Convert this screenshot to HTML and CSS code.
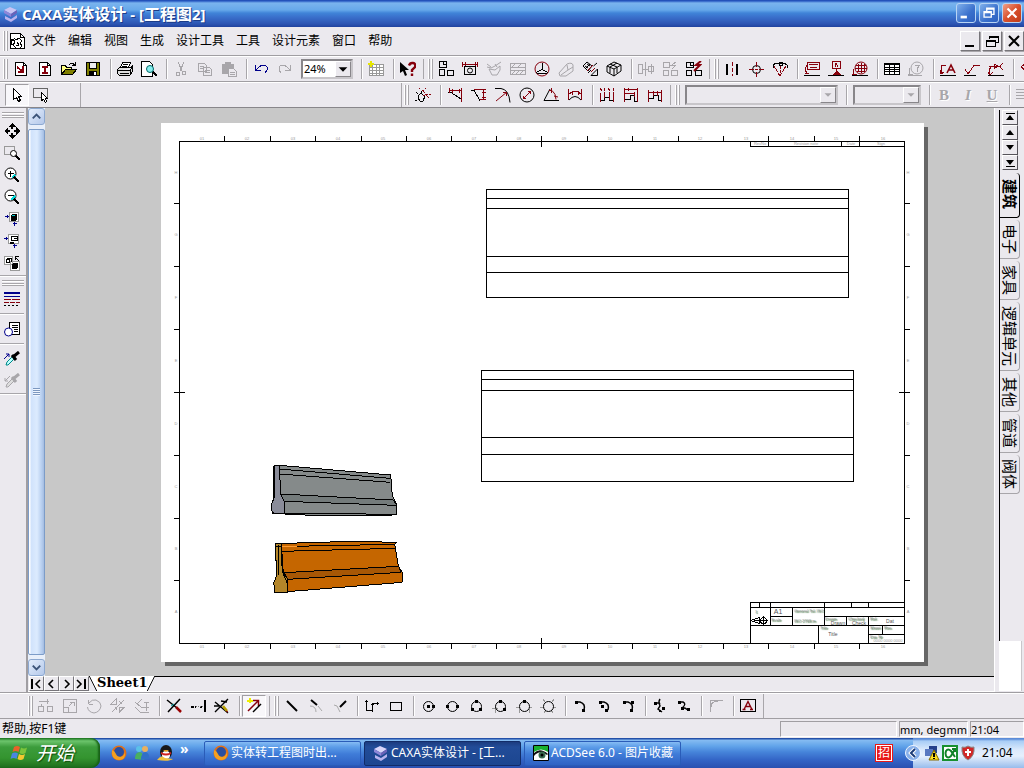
FILE: index.html
```html
<!DOCTYPE html>
<html lang="zh-CN">
<head>
    <meta charset="UTF-8">
    <meta name="viewport" content="width=device-width, initial-scale=1.0">
    <title>CAXA实体设计 - [工程图2]</title>
    <link rel="stylesheet" href="styles.css">
</head>
<body>
    <header class="titlebar">
        <svg class="logo" viewBox="0 0 16 16"><path fill="#c9c4f4" d="M1 4l6-3 7 3-6 4z"/><path fill="#8d86d8" d="M1 4l7 4v3L1 7z"/><path fill="#6a62b8" d="M14 4v3l-6 4V8z"/><path fill="#b8b2ee" d="M2 10l6 3 6-4v3l-6 4-6-3z"/></svg>
        <h1><span class="latin">CAXA</span>实体设计<span class="latin"> - [</span>工程图<span class="latin">2]</span></h1>
        <button class="winbtn" aria-label="最小化"><svg viewBox="0 0 20 20"><path fill="#fff" d="M4 13h7v3H4z"/></svg></button>
        <button class="winbtn" aria-label="还原"><svg viewBox="0 0 20 20"><path fill="none" stroke="#fff" stroke-width="1.500" d="M7.500 8V4.500h8v7H13M7 5.500h9M4.500 8.500h8v6h-8zM4 9.500h9"/></svg></button>
        <button class="winbtn close" aria-label="关闭"><svg viewBox="0 0 20 20"><path fill="none" stroke="#fff" stroke-width="2.400" d="M5 5l10 10M15 5L5 15"/></svg></button>
    </header>

    <nav class="menubar">
        <span class="grip"></span>
        <svg class="icon doc" viewBox="0 0 16 16"><path fill="#fff" d="M1.500.500h10l4 4v11h-14z"/><path d="M11.500 1v3.500H15M1 6h4M5 5l2 2 3-2 3 3-2 2 2 3-2 2M2 8l3-1 1 3-3 2zM4 12l3 3M8 9l2 3-3 1"/></svg>
        <button>文件</button>
        <button>编辑</button>
        <button>视图</button>
        <button>生成</button>
        <button>设计工具</button>
        <button>工具</button>
        <button>设计元素</button>
        <button>窗口</button>
        <button>帮助</button>
        <div class="mdi">
            <button aria-label="最小化"><svg class="icon" viewBox="0 0 16 16"><path class="fill" d="M3 12h9v2H3z"/></svg></button>
            <button aria-label="还原"><svg class="icon" viewBox="0 0 16 16"><path d="M5.500 6V3.500h9v6H12M5 4.500h10M2.500 7.500h9v6h-9zM2 8.500h10"/></svg></button>
            <button aria-label="关闭"><svg class="icon smooth" viewBox="0 0 16 16"><path stroke-width="2" d="M3 3l10 10M13 3L3 13"/></svg></button>
        </div>
    </nav>

    <div class="toolbar">
        <span class="grip"></span>
        <button aria-label="新建图纸"><svg class="icon" viewBox="0 0 16 16"><path fill="#fff" d="M2.500 1.500h8l3 3v10h-11z"/><path d="M10.500 2v2.500H13"/><path class="red" stroke-width="2" d="M4 6l5 4M10 5v6H5"/></svg></button>
        <button aria-label="新建"><svg class="icon" viewBox="0 0 16 16"><path fill="#fff" d="M2.500 1.500h8l3 3v10h-11z"/><path d="M10.500 2v2.500H13"/><path class="red" stroke-width="2" d="M5 6h6M5 12h6M8 6v6"/></svg></button>
        <button aria-label="打开"><svg class="icon" viewBox="0 0 16 16"><path fill="#ffff80" d="M.500 13.500v-9h4l1 2h5v2"/><path fill="#808000" d="M.500 13.500l4-5h11l-4 5z"/><path d="M8 3.500l2-1h2l2 2M14.500 1v3.500H11"/></svg></button>
        <button aria-label="保存"><svg class="icon" viewBox="0 0 16 16"><path fill="#808000" d="M1.500 1.500h13v13h-13z"/><path fill="#eee" d="M4.500 1.500h7v6h-7z"/><path class="fill" d="M4 10h8v5H4z"/><path fill="#fff" stroke="none" d="M9 11h2v3H9z"/></svg></button>
        <span class="sep"></span>
        <button aria-label="打印"><svg class="icon" viewBox="0 0 16 16"><path fill="#fff" d="M3.500 6.500l2-5h8l-2 5zM6 3.500h5M5 5.500h5"/><path fill="#ddd" d="M.500 8.500l2-2h11l2-2v6l-3 4H2.500l-2-2zM1 9.500h12l2-3M3 12.500h9M13.500 9v4"/></svg></button>
        <button aria-label="打印预览"><svg class="icon" viewBox="0 0 16 16"><path fill="#fff" d="M.500.500h8l3 3v12H.500z"/><circle fill="#8ee" stroke="#066" cx="9" cy="8" r="3.500"/><path stroke-width="2" d="M12 11l4 4"/></svg></button>
        <span class="sep"></span>
        <button disabled aria-label="剪切"><svg class="icon dim" viewBox="0 0 16 16"><path d="M5 1l4 9M11 1L7 10M3.500 11.500h3v3h-3zM9.500 10.500h3v3h-3z"/></svg></button>
        <button disabled aria-label="复制"><svg class="icon dim" viewBox="0 0 16 16"><path d="M1.500 2.500h6l2 2v6h-8zM3 5.500h4M3 7.500h4M6.500 6.500h6l2 2v6h-8zM8 9.500h5M8 11.500h5"/></svg></button>
        <button disabled aria-label="粘贴"><svg class="icon dim" viewBox="0 0 16 16"><path class="fill" d="M1 3h12v4h-6v6H1zM4 1h6v3H4z"/><path d="M7.500 7.500h5l3 3v5h-8zM9 11.500h5M9 13.500h5"/></svg></button>
        <span class="sep"></span>
        <button aria-label="撤消"><svg class="icon blue" viewBox="0 0 16 16"><path d="M2.500 4v5.500H8M3 9l3-3 3-2h3l2 2v3l-2 3"/></svg></button>
        <button disabled aria-label="重做"><svg class="icon dim" viewBox="0 0 16 16"><path d="M13.500 4v5.500H8M13 9l-3-3-3-2H4L2 6v3l2 3"/></svg></button>
        <span class="combo zoom">
            <select aria-label="显示比例"><option>24%</option><option>50%</option><option>100%</option></select>
            <svg class="arrow" viewBox="0 0 16 16"><path d="M3 6h10l-5 5z"/></svg>
        </span>
        <span class="sep"></span>
        <button aria-label="栅格"><svg class="icon" viewBox="0 0 16 16"><path stroke="#999" fill="#fff" d="M1.500 3.500h14v11h-14zM1 6.500h14M1 9.500h14M1 12.500h14M4.500 3v12M8.500 3v12M11.500 3v12"/><path stroke="#e6e600" stroke-width="2" d="M0 3h6M3 0v6"/></svg></button>
        <span class="sep"></span>
        <button aria-label="帮助"><svg class="icon smooth" viewBox="0 0 16 16"><path class="fill" d="M0 1v11l3-2 2 5 2-1-2-5h4z"/><path class="red" stroke-width="2.400" d="M9 4.500Q10 1.500 13 2t2 4l-3 3v2M12 12.500v2.500"/></svg></button>
        <span class="grip mid"></span>
        <button aria-label="标准视图"><svg class="icon" viewBox="0 0 16 16"><path d="M1.500.500h7v6h-7zM5 1v2.500h3M1.500 8.500h5v6h-5zM9.500 9.500h6v5h-6z"/></svg></button>
        <button aria-label="投影视图"><svg class="icon" viewBox="0 0 16 16"><path d="M2.500 5.500h11v8h-11z"/><circle cx="8" cy="9.500" r="2.500"/><path class="red" d="M.500 1v5M15.500 1v5M0 3.500h16M3 1v4M13 1v4"/></svg></button>
        <button disabled aria-label="向视图"><svg class="icon dim smooth" viewBox="0 0 16 16"><path d="M1 6l4 1 4-2 6-4M3 8l3 6h5l3-5V5L9 9zM1 3l4 3M9 3l2 3"/></svg></button>
        <button disabled aria-label="剖视图"><svg class="icon dim" viewBox="0 0 16 16"><path d="M.500 2.500h15v11H.500zM1 6.500h14M1 9.500h14M2 13l4-4M6 13l4-4M10 13l4-4M2 6l3-3M8 6l3-3"/></svg></button>
        <button aria-label="截断视图"><svg class="icon" viewBox="0 0 16 16"><circle class="red" cx="8" cy="8" r="7"/><path d="M8.500 2v6M8 8.500l-6 3M8 8.500l6 3M3 12h10"/></svg></button>
        <button disabled aria-label="局部放大"><svg class="icon dim smooth" viewBox="0 0 16 16"><path d="M1 12l8-9q5-2 6 1v6l-7 5H2zM9 4l1 5-7 5M10 9l5-3"/></svg></button>
        <button aria-label="辅助视图"><svg class="icon smooth" viewBox="0 0 16 16"><path d="M1 5l4-4 5 4-4 5zM3 5l3 2M5 3l3 2M4 7l4-4M11.500 5L15 2M6 12l3-3M9 14.500h6.500V8z"/><path class="red" d="M11 4l-6 6M9 11l4-4"/></svg></button>
        <button aria-label="轴测图"><svg class="icon smooth" viewBox="0 0 16 16"><path d="M1 5l7-4 7 3v6l-7 5-7-4zM1 5l7 3 7-4M8 8v7M4 3l7 3v6M11 2L4 6v6"/></svg></button>
        <span class="sep"></span>
        <button disabled aria-label="对齐"><svg class="icon dim" viewBox="0 0 16 16"><path d="M.500 3.500h4v9h-4zM7.500 1v14M10.500 5.500h5v5h-5zM5 8.500h5M13.500 3v10"/></svg></button>
        <button disabled aria-label="更新"><svg class="icon dim" viewBox="0 0 16 16"><path d="M1.500 1.500h6v5h-6zM1.500 9.500h5v5h-5zM9.500 9.500h6v5h-6zM14 1l-4 3h4l-4 4"/></svg></button>
        <button aria-label="更新全部"><svg class="icon" viewBox="0 0 16 16"><path d="M.500 1.500h7v5h-7zM4 2v2h3M.500 9.500h5v5h-5zM9.500 9.500h6v5h-6z"/><path class="red smooth" stroke-width="2" d="M15 0l-5 4h4l-6 6"/></svg></button>
        <span class="grip mid"></span>
        <button aria-label="中心线"><svg class="icon" viewBox="0 0 16 16"><path stroke-width="2" d="M3 3v11M13 3v11"/><path class="red" stroke-dasharray="4 2" d="M8.500 1v14"/></svg></button>
        <button aria-label="中心标记"><svg class="icon" viewBox="0 0 16 16"><circle cx="8.500" cy="8.500" r="4"/><path class="red" d="M8.500 1v5M8.500 11v5M1 8.500h5M11 8.500h5M7 8.500h3"/></svg></button>
        <button aria-label="孔组中心"><svg class="icon" viewBox="0 0 16 16"><path d="M1 4l3-2 4 1 4-1 3 2M1 4v3M15 4v3M7 1h3v3H7z"/><path class="red" stroke-dasharray="3 1" d="M2 5l6 10M14 5L8 15M8.500 5v9"/></svg></button>
        <span class="sep"></span>
        <button aria-label="引出说明"><svg class="icon red" viewBox="0 0 16 16"><path d="M3.500 1.500h12v7h-12zM5 3.500h9M6 6.500h7M3 4L1 8l2 5M1 12h4"/><path class="blk" d="M0 14.500h16"/></svg></button>
        <button aria-label="基准"><svg class="icon red" viewBox="0 0 16 16"><path d="M4.500.500h8v7h-8zM7 6l1-4 2 4M8.500 8v5"/><path class="redfill" d="M5 14l4-4 4 4z"/><path class="blk" d="M0 14.500h16"/></svg></button>
        <button aria-label="零件序号"><svg class="icon red" viewBox="0 0 16 16"><circle cx="9" cy="7" r="6"/><path d="M3 7h12M6 3v8M9 2v10M12 3v8M4 4h10M2 8l-1 5h4M5 10h8"/><path class="blk" d="M0 14.500h16"/></svg></button>
        <span class="sep"></span>
        <button aria-label="明细表"><svg class="icon" viewBox="0 0 16 16"><path fill="#fff" d="M.500 2.500h15v11H.500z"/><path d="M1 3.500h15M1 6.500h15M1 8.500h15M1 10.500h15M5.500 2v12M10.500 2v12"/></svg></button>
        <button disabled aria-label="查询"><svg class="icon dim" viewBox="0 0 16 16"><circle cx="9" cy="7" r="6"/><path d="M7 4h5L9 8v3M2 7l-1 6h4M0 14.500h14"/></svg></button>
        <span class="sep"></span>
        <button aria-label="文字标注"><svg class="icon red" viewBox="0 0 16 16"><path class="smooth" stroke-width="1.600" d="M7 12l4-8 4 8M8 9h5"/><path d="M6 4.500H1v8M0 9l1 4 3-2"/><path class="blk" d="M0 14.500h16"/></svg></button>
        <button aria-label="粗糙度"><svg class="icon red" viewBox="0 0 16 16"><path d="M1 8l3 5 6-8.500h6"/><path class="blk" d="M0 14.500h12"/></svg></button>
        <button aria-label="焊接符号"><svg class="icon red" viewBox="0 0 16 16"><path d="M1 5.500h12M15 2l-3 3.500 3 3.500M6 3v5l4-3zM3 5l-2 5 1 3M0 11l2 3 3-3"/><path class="blk" d="M0 14.500h16"/></svg></button>
        <span class="sep"></span>
        <button aria-label="更多"><svg class="icon red" viewBox="0 0 16 16"><path d="M1 6l4-3v6z"/></svg></button>
    </div>

    <div class="toolbar">
        <div class="group first">
            <button class="pressed" aria-label="选择"><svg class="icon" viewBox="0 0 16 16"><path fill="#fff" d="M4.500 1.500v11l3-2 2 4 2-1-2-4h3z"/></svg></button>
            <button aria-label="框选"><svg class="icon" viewBox="0 0 16 16"><path stroke="#666" d="M.500 1.500h14v9H.500z"/><path fill="#fff" d="M8.500 5.500v8l2-1 2 3 1-1-1-3h2z"/></svg></button>
        </div>
        <div class="group blank"></div>
        <span class="grip"></span>
        <button aria-label="智能标注"><svg class="icon" viewBox="0 0 16 16"><path d="M4 8l2-2 2 2 2 1-2 5H5l-2-3zM6 6V4M3 7L1 5M2 13l-2 1"/><path class="red" stroke-dasharray="2 1" d="M4 1l4 3 7 8M11 1l-3 4M8 9l8-2"/></svg></button>
        <span class="sep"></span>
        <button aria-label="水平标注"><svg class="icon" viewBox="0 0 16 16"><path d="M1 5.500h3L14 12"/><path class="red" d="M2.500 1v5M14.500 1v14M3 3.500h11M5 2v4M12 2v4"/></svg></button>
        <button aria-label="垂直标注"><svg class="icon" viewBox="0 0 16 16"><path d="M0 3h3l6 11"/><path class="red" d="M3 2.500h12M9 12.500h6M12.500 3v10M11 5h4M11 10h4"/></svg></button>
        <button aria-label="半径标注"><svg class="icon smooth" viewBox="0 0 16 16"><path d="M0 1.500h6q8 1 9 14"/><path class="red" d="M1 14L12 5M8 5.500h3.500V9"/></svg></button>
        <button aria-label="直径标注"><svg class="icon smooth" viewBox="0 0 16 16"><circle cx="8" cy="8" r="7"/><path class="red" d="M4 12l8-8M9 4.500h2.500V7M4.500 9v2.500H7"/></svg></button>
        <button aria-label="角度标注"><svg class="icon smooth" viewBox="0 0 16 16"><path d="M7 2L1 13.500h15"/><path class="red" d="M6 3.500h3q4 3 4 9M8.500 1v5M11 9l4 1"/></svg></button>
        <button aria-label="弧长标注"><svg class="icon red" viewBox="0 0 16 16"><path d="M1.500 2v11M14.500 2v11M2 7l3-2q3-2 6 0l3 2M5 4v4M11 4v4"/><path class="blk smooth" d="M2 13q6-7 12 0"/></svg></button>
        <span class="sep"></span>
        <button aria-label="连续标注"><svg class="icon" viewBox="0 0 16 16"><path d="M1 13.500h4V6M5 10.500h5V6M10 13.500h4V6"/><path class="red" d="M1.500 6v9M5.500 5v6M10.500 5v8M14.500 5v10M1 1l2 3M5 1v3M9 1l2 3M14 1v3"/></svg></button>
        <button aria-label="基线标注"><svg class="icon" viewBox="0 0 16 16"><path d="M2 12.500h5v-4h4v6h4"/><path class="red" d="M1.500 1v14M14.500 1v14M2 2.500h12M2 6.500h9M5 1v3M11 5v5"/></svg></button>
        <button aria-label="链式标注"><svg class="icon" viewBox="0 0 16 16"><path d="M2 11.500h4v-3h5v5h4"/><path class="red" d="M1.500 3v12M14.500 3v12M2 5.500h12M6.500 4v5M10.500 4v5"/></svg></button>
        <span class="grip mid"></span>
        <span class="combo font">
            <select disabled aria-label="字体"><option></option></select>
            <svg class="arrow" viewBox="0 0 16 16"><path d="M4 6h8l-4 4z"/></svg>
        </span>
        <span class="sep"></span>
        <span class="combo size">
            <select disabled aria-label="字号"><option></option></select>
            <svg class="arrow" viewBox="0 0 16 16"><path d="M4 6h8l-4 4z"/></svg>
        </span>
        <span class="sep"></span>
        <button disabled class="letter"><b>B</b></button>
        <button disabled class="letter"><i>I</i></button>
        <button disabled class="letter"><u>U</u></button>
        <span class="sep"></span>
        <button disabled aria-label="左对齐"><svg class="icon dim" viewBox="0 0 16 16"><path d="M0 2.500h16M0 5.500h12M0 8.500h16M0 11.500h12"/></svg></button>
    </div>

    <div class="workspace">
        <aside class="sidebar">
            <span class="hgrip"></span>
            <button aria-label="平移"><svg class="icon" viewBox="0 0 16 16"><path class="fill" d="M8 0l4 4H9v2H7V4H4zM8 16l4-4H9v-2H7v2H4zM0 8l4-4v3h2v2H4v3zM16 8l-4-4v3h-2v2h2v3z"/></svg></button>
            <button aria-label="窗口缩放"><svg class="icon" viewBox="0 0 16 16"><path stroke="#999" d="M.500 1.500h10v8H.500z"/><circle fill="#fff" cx="9.500" cy="8.500" r="3"/><path stroke-width="2" d="M12 11l4 4"/></svg></button>
            <button aria-label="放大"><svg class="icon" viewBox="0 0 16 16"><circle fill="#fff" cx="6.500" cy="6.500" r="5.500"/><path stroke="#0dd" stroke-width="2" d="M8 11l3-3"/><path d="M4 6.500h6M6.500 4v6"/><path stroke-width="2" d="M10 10l5 5"/></svg></button>
            <button aria-label="缩小"><svg class="icon" viewBox="0 0 16 16"><circle fill="#fff" cx="6.500" cy="6.500" r="5.500"/><path stroke="#0dd" stroke-width="2" d="M7 11l4-4"/><path d="M4 6.500h6"/><path stroke-width="2" d="M10 10l5 5"/></svg></button>
            <button aria-label="显示全部"><svg class="icon" viewBox="0 0 16 16"><path stroke="#999" fill="#fff" d="M5.500 1.500h9v9h-9z"/><path class="fill" d="M7 4l2-1h4v5l-2 2H7z"/><path stroke="#0cc" d="M8 4.500h3"/><path class="blue" d="M1 5.500h4M3.500 4v3M10.500 11v4M9 12.500h4"/></svg></button>
            <button aria-label="显示图纸"><svg class="icon" viewBox="0 0 16 16"><path stroke="#999" fill="#fff" d="M4.500 1.500h10v9h-10z"/><path d="M7.500 3.500h6v4h-6zM10 5.500h3"/><path class="fill" d="M6 9h4v2H6z"/><path class="blue" d="M0 5.500h4M2.500 4v3M10.500 11v4M9 12.500h4"/></svg></button>
            <button aria-label="恢复视向"><svg class="icon" viewBox="0 0 16 16"><path stroke="#999" fill="#fff" d="M.500 1.500h8v8h-8zM6.500 6.500h9v9h-9z"/><path d="M2.500 4.500h3v3h-3zM3 3.500h4v3M11 5V1.500h4M11 2l4 4"/><path class="fill" d="M8 9l2-1h4v4l-2 2H8z"/></svg></button>
            <span class="hsep wide"></span>
            <span class="hgrip"></span>
            <button aria-label="线型"><svg class="icon" viewBox="0 0 16 16"><path stroke="#00008b" stroke-width="2" d="M0 2h16"/><path class="blue" d="M0 5.500h16"/><path class="red" d="M0 8.500h7M8 8.500h8M0 11.500h5M6 11.500h5M12 11.500h4"/><path stroke-dasharray="2 2" d="M0 14.500h16"/></svg></button>
            <span class="hsep"></span>
            <button aria-label="属性"><svg class="icon" viewBox="0 0 16 16"><path fill="#fff" d="M5.500 1.500h10v12h-10z"/><path d="M8 4.500h6M8 6.500h6M10 8.500h4M10 10.500h4"/><circle class="blue" fill="#fff" cx="4.500" cy="11" r="4"/></svg></button>
            <span class="hsep"></span>
            <button aria-label="提取属性"><svg class="icon smooth" viewBox="0 0 16 16"><path stroke="#088" fill="#bff" d="M2 14l1-3 6-6 2 2-7 7z"/><path stroke-width="3" d="M9 6l6-5M8 4l4 5"/><path class="blue" d="M0 8l5-5M2 3h3v3"/></svg></button>
            <button disabled aria-label="应用属性"><svg class="icon dim smooth" viewBox="0 0 16 16"><path fill="#ddd" d="M2 14l1-3 6-6 2 2-7 7z"/><path stroke-width="3" d="M9 6l6-5M8 4l4 5"/><path d="M1 8l5-5M1 5v3h3"/></svg></button>
            <span class="hsep wide"></span>
        </aside>

        <div class="center">
            <div class="view">
                <div class="vscroll">
                    <button aria-label="向上滚动"><svg viewBox="0 0 16 16"><path d="M4 10l4-4 4 4"/></svg></button>
                    <div class="thumb"><i></i></div>
                    <button aria-label="向下滚动"><svg viewBox="0 0 16 16"><path d="M4 6l4 4 4-4"/></svg></button>
                </div>
                <main class="canvas">
                    <svg class="sheet" viewBox="161 123 763 539">
                        <!-- border and zone marks -->
                        <path class="line" d="M179.500 141.500h725v502h-725z"/>
                        <path class="line" d="M224.500 136v5M270.500 136v5M315.500 136v5M361.500 136v5M406.500 136v5M451.500 136v5M496.500 136v5M541.500 136v11M587.500 136v5M632.500 136v5M678.500 136v5M723.500 136v5M768.500 136v5M814.500 136v5M859.500 136v5"/>
                        <path class="line" d="M224.500 643v6M270.500 643v6M315.500 643v6M361.500 643v6M406.500 643v6M451.500 643v6M496.500 643v6M541.500 638v11M587.500 643v6M632.500 643v6M678.500 643v6M723.500 643v6M768.500 643v6M814.500 643v6M859.500 643v6"/>
                        <path class="line" d="M174 203.500h6M174 266.500h6M174 329.500h6M174 392.500h11M174 455.500h6M174 518.500h6M174 580.500h6M904 203.500h6M904 266.500h6M904 329.500h6M899 392.500h11M904 455.500h6M904 518.500h6M904 580.500h6"/>
                        <g class="zone">
                            <text x="202" y="140">01</text><text x="247" y="140">02</text><text x="293" y="140">03</text><text x="338" y="140">04</text><text x="383" y="140">05</text><text x="429" y="140">06</text><text x="474" y="140">07</text><text x="519" y="140">08</text><text x="564" y="140">09</text><text x="610" y="140">10</text><text x="655" y="140">11</text><text x="700" y="140">12</text><text x="746" y="140">13</text><text x="792" y="140">14</text><text x="836" y="140">15</text><text x="883" y="140">16</text>
                            <text x="202" y="648">01</text><text x="247" y="648">02</text><text x="293" y="648">03</text><text x="338" y="648">04</text><text x="383" y="648">05</text><text x="429" y="648">06</text><text x="474" y="648">07</text><text x="519" y="648">08</text><text x="564" y="648">09</text><text x="610" y="648">10</text><text x="655" y="648">11</text><text x="700" y="648">12</text><text x="746" y="648">13</text><text x="792" y="648">14</text><text x="836" y="648">15</text><text x="883" y="648">16</text>
                            <text x="176" y="174">H</text><text x="176" y="236">G</text><text x="176" y="299">F</text><text x="176" y="362">E</text><text x="176" y="425">D</text><text x="176" y="488">C</text><text x="176" y="550">B</text><text x="176" y="613">A</text>
                            <text x="908" y="174">H</text><text x="908" y="236">G</text><text x="908" y="299">F</text><text x="908" y="362">E</text><text x="908" y="425">D</text><text x="908" y="488">C</text><text x="908" y="550">B</text><text x="908" y="613">A</text>
                        </g>
                        <!-- revision strip -->
                        <path class="line" d="M750.500 141v5.500h154M768.500 141v5M841.500 141v5M859.500 141v5"/>
                        <g class="zone"><text x="760" y="145">RevNo</text><text x="806" y="145">Revision note</text><text x="851" y="145">Date</text><text x="881" y="145">Sign</text></g>
                        <!-- front and top views -->
                        <path class="line" d="M486.500 189.500h362v108h-362zM486 198.500h362M486 208.500h362M486 256.500h362M486 272.500h362"/>
                        <path class="line" d="M481.500 370.500h372v111h-372zM481 379.500h372M481 390.500h372M481 437.500h372M481 454.500h372"/>
                        <!-- shaded isometric views -->
                        <g class="solid" transform="translate(255 450) scale(.33333)">
                            <path fill="#858a8a" d="M57 47l16-1 334 29 5 62 13 27v28l-28 6-250-3-95-5-2-26 7-25z"/>
                            <path fill="#8a8c99" d="M57 47l16-1 4 86 11 22v37H52l-3-26 10-25z"/>
                            <path fill="#747b7b" d="M77 132l337 18 11 16-337-12z"/>
                            <path d="M72 57l333 28M72 72l334 25M52 189l373 4M88 154v37"/>
                            <path fill="#c56600" d="M61 281l232-7 132 3-6 6 11 66 12 18v30L60 428l-4-30 9-16z"/>
                            <path fill="#b4862a" d="M61 281h18l6 90 14 17v40H60l-4-30 9-20z"/>
                            <path fill="#a75705" d="M87 368l344-19 6 18-338 21z"/>
                            <path d="M61 290l357-7M80 304l340-9M70 285l2 90M78 290l4 75 15 35v27"/>
                            <path class="shine" d="M82 289l45-1"/>
                        </g>
                        <!-- title block -->
                        <path class="line" d="M750.500 643v-40.500h154M750 607.500h154M759.500 602v5M770.500 602v23M824.500 602v23M851.500 602v5M868.500 602v5M792.500 607v18M770 616.500h22M824 616.500h80M846.500 616v9M868.500 616v27M750 625.500h154M818.500 625v18M868 634.500h36M882.500 625v9"/>
                        <path class="line" d="M751 620.500l8-3v6zM754 620.500h14M763.500 616v9"/><circle class="line" cx="763.500" cy="620.500" r="3"/>
                        <g class="zone start"><text x="755" y="613">1</text><text x="771" y="621">Scale</text><text x="794" y="612">General Tol. ISO</text><text x="794" y="622">ISO 2768-m</text><text x="825" y="620">Drawn</text><text x="848" y="620">Checked</text><text x="870" y="620">Ref.</text><text x="820" y="629">Title</text><text x="870" y="629">Sheet</text><text x="884" y="629">Rev.</text><text x="870" y="638">Doc Nr</text></g>
                        <g class="field"><text x="778" y="614" class="big">A1</text><text x="838" y="625">Drawn</text><text x="859" y="625">Check</text><text x="890" y="623">Dat</text><text x="833" y="636">Title</text></g>
                        <g class="zone"><text x="888" y="642">0000 0000 0000</text></g>
                    </svg>
                </main>
            </div>
            <div class="sheettabs">
                <button class="nav" aria-label="第一页"><svg class="icon" viewBox="0 0 13 13"><path stroke-width="2" d="M2 2v10"/><path class="smooth" stroke-width="1.600" d="M10 3L6 7l4 4"/></svg></button>
                <button class="nav" aria-label="上一页"><svg class="icon" viewBox="0 0 13 13"><path class="smooth" stroke-width="1.600" d="M8 3L4 7l4 4"/></svg></button>
                <button class="nav" aria-label="下一页"><svg class="icon" viewBox="0 0 13 13"><path class="smooth" stroke-width="1.600" d="M5 3l4 4-4 4"/></svg></button>
                <button class="nav" aria-label="最后一页"><svg class="icon" viewBox="0 0 13 13"><path class="smooth" stroke-width="1.600" d="M2 3l4 4-4 4"/><path stroke-width="2" d="M10 2v10"/></svg></button>
                <button class="tab"><svg viewBox="0 0 8 16"><path class="paper" d="M0 0h8v16z"/><path d="M0 0l8 16"/></svg><span>Sheet1</span><svg viewBox="0 0 8 16"><path class="paper" d="M0 0h8L0 16z"/><path d="M8 0L0 16"/></svg></button>
                <span class="rest"></span>
            </div>
        </div>

        <aside class="catalog">
            <div class="strip">
                <button class="nav" aria-label="首个"><svg viewBox="0 0 14 13"><path d="M3 2h9v1H3zM7 4l4 5H3z"/></svg></button>
                <button class="nav" aria-label="向上"><svg viewBox="0 0 14 13"><path d="M7 4l4 5H3z"/></svg></button>
                <button class="nav" aria-label="向下"><svg viewBox="0 0 14 13"><path d="M3 4h8l-4 5z"/></svg></button>
                <button class="nav" aria-label="末个"><svg viewBox="0 0 14 13"><path d="M3 4h8l-4 5zM3 10h9v1H3z"/></svg></button>
                <div class="tabs">
                    <button class="on">建筑</button>
                    <button>电子</button>
                    <button>家具</button>
                    <button>逻辑单元</button>
                    <button>其他</button>
                    <button>管道</button>
                    <button>阀体</button>
                </div>
            </div>
            <div class="well"></div>
        </aside>
    </div>

    <div class="toolbar bottom">
        <span class="grip"></span>
        <button disabled aria-label="移动"><svg class="icon dim" viewBox="0 0 16 16"><path d="M.500 8.500h5v5h-5zM9.500 8.500h5v5h-5zM1 3.500h10M9 1v5M3.500 6v2"/></svg></button>
        <button disabled aria-label="缩放"><svg class="icon dim" viewBox="0 0 16 16"><path d="M1.500 1.500h13v13h-13zM1.500 9.500h5v5M7 8l4-4M8 4.500h4V8"/></svg></button>
        <button disabled aria-label="旋转"><svg class="icon dim smooth" viewBox="0 0 16 16"><path d="M3 6.500h4M2.500 2v4M3 5q3-4 7-3 5 2 5 6-1 6-7 7-6-1-6.500-6"/></svg></button>
        <button disabled aria-label="镜像"><svg class="icon dim" viewBox="0 0 16 16"><path d="M1 6l5-5v5zM9 9.500h5l-5 5zM2 14L14 2M9 3l3 3M5 9l2 3"/></svg></button>
        <button disabled aria-label="偏移"><svg class="icon dim" viewBox="0 0 16 16"><path d="M1 4l6 5h8M1 9l5 5h9M8 1L3 6M12.500 5v8M10 4.500h5"/></svg></button>
        <span class="sep"></span>
        <button aria-label="裁剪"><svg class="icon smooth" viewBox="0 0 16 16"><path stroke-width="1.500" d="M1 2l10 8M14 1L2 14"/><path stroke="#900" stroke-width="2.500" d="M10 9l5 5"/><path stroke="#0aa" d="M5 8l3-2"/></svg></button>
        <button aria-label="延伸"><svg class="icon" viewBox="0 0 16 16"><path stroke-width="2" d="M15 2v12M1 9h3M5 9h1M11 8v2"/><path stroke="#777" stroke-dasharray="1 1" d="M6 8.500h8"/></svg></button>
        <button aria-label="打断"><svg class="icon smooth" viewBox="0 0 16 16"><path stroke-width="1.400" d="M1 4l13 11M14 1L1 14M0 8h5M7 3l6 1"/><path stroke="#b8a000" stroke-width="2.500" d="M9 8l4 5"/><path stroke="#800" d="M12 13l2 1"/></svg></button>
        <span class="sep"></span>
        <button class="pressed" aria-label="捕捉"><svg class="icon smooth" viewBox="0 0 16 16"><path stroke="#ee0" stroke-width="2" d="M1 3h6M4 0v5"/><path class="red" stroke-width="1.500" d="M2 13l10-10M7 2.500h5.500V8"/><path stroke-width="1.500" d="M7 14l8-8"/></svg></button>
        <span class="grip mid"></span>
        <button aria-label="直线"><svg class="icon smooth" viewBox="0 0 16 16"><path stroke-width="2" d="M3 3l10 10"/></svg></button>
        <button aria-label="切线"><svg class="icon smooth" viewBox="0 0 16 16"><path stroke-width="2" d="M3 2l6 5"/><path stroke="#aaa" d="M2 8q6 0 6 6M10 8l4 5"/></svg></button>
        <button aria-label="垂线"><svg class="icon smooth" viewBox="0 0 16 16"><path stroke-width="2" d="M14 3L8 9"/><path stroke="#aaa" d="M2 7l3 1 3 6"/></svg></button>
        <span class="sep"></span>
        <button aria-label="折线"><svg class="icon" viewBox="0 0 16 16"><path d="M2.500 2v11M1 3.500h3M2 12.500h6M8.500 14V5.500H15M13 4v3M7 6.500h3"/></svg></button>
        <button aria-label="矩形"><svg class="icon" viewBox="0 0 16 16"><path d="M2.500 4.500h11v8h-11z"/></svg></button>
        <span class="sep"></span>
        <button aria-label="圆"><svg class="icon" viewBox="0 0 16 16"><circle cx="8.500" cy="8.500" r="5"/><path class="fill" d="M7 7h3v3H7zM12 7h3v3h-3z"/></svg></button>
        <button aria-label="两点圆"><svg class="icon" viewBox="0 0 16 16"><circle cx="8.500" cy="8.500" r="5"/><path class="fill" d="M2 7h3v3H2zM12 7h3v3h-3z"/></svg></button>
        <button aria-label="三点圆"><svg class="icon" viewBox="0 0 16 16"><circle cx="8.500" cy="8.500" r="5"/><path class="fill" d="M7 2h3v3H7zM3 10h3v3H3zM11 10h3v3h-3z"/></svg></button>
        <button aria-label="一切点圆"><svg class="icon" viewBox="0 0 16 16"><path stroke="#999" d="M0 10.500h6M3.500 8v7"/><circle cx="8.500" cy="8.500" r="5"/><path class="fill" d="M7 2h3v3H7zM11 10h3v3h-3z"/></svg></button>
        <button aria-label="两切点圆"><svg class="icon" viewBox="0 0 16 16"><path stroke="#999" d="M0 9.500h16M3.500 11v4M13.500 11v4"/><circle fill="#ebe9ee" cx="8.500" cy="8.500" r="5"/><path class="fill" d="M7 2h3v3H7z"/></svg></button>
        <button aria-label="三切点圆"><svg class="icon" viewBox="0 0 16 16"><path stroke="#999" d="M0 9.500h16M3 1l2 3M14 1l-2 3M4 15l2-3M13 15l-2-3"/><circle fill="#ebe9ee" cx="8.500" cy="8.500" r="5"/></svg></button>
        <span class="sep"></span>
        <button aria-label="圆弧"><svg class="icon" viewBox="0 0 16 16"><path class="smooth" stroke-width="1.400" d="M4 4h4q6 2 4 8"/><path class="fill" d="M3 3h3v3H3zM10 11h3v3h-3z"/></svg></button>
        <button aria-label="圆心弧"><svg class="icon" viewBox="0 0 16 16"><path class="smooth" stroke-width="1.400" d="M4 4h4q6 2 4 8"/><path class="fill" d="M3 3h3v3H3zM5 7h3v3H5zM9 11h3v3H9z"/></svg></button>
        <button aria-label="三点弧"><svg class="icon" viewBox="0 0 16 16"><path class="smooth" stroke-width="1.400" d="M4 4h4q6 2 4 8"/><path class="fill" d="M3 3h3v3H3zM11 3h3v3h-3zM10 11h3v3h-3z"/></svg></button>
        <span class="sep"></span>
        <button aria-label="样条"><svg class="icon" viewBox="0 0 16 16"><path class="smooth" stroke-width="1.400" d="M3 5h4l1 3-2 3 4 3M8 1q-2 3 0 5"/><path class="fill" d="M2 4h3v3H2zM10 9h3v3h-3zM7 12h2v2H7z"/></svg></button>
        <button aria-label="贝塞尔"><svg class="icon" viewBox="0 0 16 16"><path class="smooth" stroke-width="1.400" d="M3 4h4q4 2-1 6 2-1 6 2"/><path class="fill" d="M2 3h3v3H2zM11 10h3v3h-3zM5 9h3v3H5z"/></svg></button>
        <span class="sep"></span>
        <button disabled aria-label="圆角"><svg class="icon dim" viewBox="0 0 16 16"><path d="M2.500 14V2.500H15M3 9q0-6 7-6"/></svg></button>
        <span class="sep"></span>
        <button aria-label="文字"><svg class="icon" viewBox="0 0 16 16"><path d="M.500 1.500h15v12H.500z"/><path class="red smooth" stroke-width="1.400" d="M4 11.500l4-8 4 8M5.500 8.500h5M2.500 11.500h3M10 11.500h3"/></svg></button>
        <span class="end"></span>
    </div>

    <div class="status">
        <p>帮助,按F1键</p>
        <span class="pane wide"></span>
        <span class="pane units"><span>mm, deg</span><span>mm</span></span>
        <span class="pane time">21:04</span>
    </div>

    <footer class="taskbar">
        <button class="start">
            <svg viewBox="0 0 20 20"><path fill="#e8622a" d="M4 4q3-2 6 0L8.500 9q-3-2-6 0z"/><path fill="#7cc43c" d="M11 4.500q3 2 6 0L15.500 10q-3 2-6 0z"/><path fill="#4a86e0" d="M2 10.500q3-2 6 0L6.500 16q-3-2-6 0z"/><path fill="#f4c830" d="M9 11q3 2 6 0l-1.500 5q-3 2-6 0z"/></svg>
            <span>开始</span>
        </button>
        <div class="quick">
            <button aria-label="Firefox"><svg viewBox="0 0 16 16"><circle cx="8" cy="8" r="7.500" fill="#e07018"/><circle cx="8" cy="7" r="5" fill="#2a4fa0"/><path fill="#f4a020" d="M1 5q3 1 4 4t5 3q3-1 4-5 1 7-5 8-7 0-8-6z"/></svg></button>
            <button aria-label="Messenger"><svg viewBox="0 0 16 16"><circle cx="5" cy="4" r="3" fill="#5ac0e8"/><circle cx="11" cy="4" r="3" fill="#e8b060"/><path fill="#4ab060" d="M1 14q0-7 5-7 4 1 4 8z"/><path fill="#3070c8" d="M7 15q0-8 5-8 4 2 3 7z"/></svg></button>
            <button aria-label="QQ"><svg viewBox="0 0 16 16"><ellipse cx="9" cy="7" rx="6" ry="7" fill="#181818"/><ellipse cx="9" cy="10" rx="4" ry="4" fill="#fff"/><path fill="#e8a020" d="M6 5h6l-3 2z"/><path fill="#d02020" d="M4 7q5 3 10 0v2q-5 3-10 0z"/><path fill="#f0c040" d="M0 15q4-6 8-2l8 1q-4 3-16 1z"/></svg></button>
            <span class="more">»</span>
        </div>
        <button class="task"><svg viewBox="0 0 16 16"><circle cx="8" cy="8" r="7.500" fill="#e07018"/><circle cx="8" cy="7" r="5" fill="#2a4fa0"/><path fill="#f4a020" d="M1 5q3 1 4 4t5 3q3-1 4-5 1 7-5 8-7 0-8-6z"/></svg><span>实体转工程图时出...</span></button>
        <button class="task active"><svg viewBox="0 0 16 16"><path fill="#d9d5fa" d="M1 4l6-3 7 3-6 4z"/><path fill="#8d86d8" d="M1 4l7 4v3L1 7z"/><path fill="#6a62b8" d="M14 4v3l-6 4V8z"/><path fill="#b8b2ee" d="M2 10l6 3 6-4v3l-6 4-6-3z"/></svg><span>CAXA实体设计 - [工...</span></button>
        <button class="task"><svg viewBox="0 0 16 16"><path fill="#fff" stroke="#000" d="M.500.500h15v15H.500z"/><path fill="#18b030" d="M1 1h14v6Q8 2 1 7z"/><path fill="#111" d="M1 8q6-6 14 1l-1 1Q7 4 1 11z"/><circle cx="9" cy="10" r="3.500" fill="#3a6a50"/><circle cx="9" cy="10" r="1.500"/></svg><span>ACDSee 6.0 - 图片收藏</span></button>
        <div class="lang">招</div>
        <div class="tray">
            <button class="fold" aria-label="隐藏图标"><svg viewBox="0 0 16 16"><circle cx="8" cy="8" r="7.500" fill="#88b0ea" stroke="#eef5ff"/><path fill="none" stroke="#fff" stroke-width="4" d="M10 4L6 8l4 4"/><path fill="none" stroke="#1c3c78" stroke-width="2" d="M10 4L6 8l4 4"/></svg></button>
            <svg viewBox="0 0 16 16"><path fill="#24408c" d="M5 1h8v7H5z"/><path fill="#5878c0" d="M1 4h8v7H1z"/><path fill="#ffe020" stroke="#806800" d="M10 5l5 10H5z"/><path stroke="#000" stroke-width="2" d="M10 8v4M10 13v1"/></svg>
            <svg viewBox="0 0 16 16"><path fill="#fff" stroke="#189030" stroke-width="2" d="M1 1h14v14H1z"/><path fill="none" stroke="#108028" stroke-width="2" d="M13 4l-4 7q-3 3-5 0-1-3 0-5 2-3 5 0l4 6M10 4h3v3"/></svg>
            <svg viewBox="0 0 16 16"><path fill="#d02828" stroke="#888" d="M2 2q3 1 6-1 3 2 6 1 1 9-6 13Q1 11 2 2z"/><path stroke="#fff" stroke-width="2" d="M8 4v7M5 7h6"/></svg>
            <span>21:04</span>
        </div>
    </footer>
</body>
</html>
```

FILE: styles.css
```css
* {
    box-sizing: border-box;
}
body {
    margin: 0;
    height: 100vh;
    display: flex;
    flex-direction: column;
    overflow: hidden;
    background: #ebe9ee;
    color: #000;
    font: 12px/16px "Noto Sans", "Noto Sans CJK SC", sans-serif;
}
button {
    margin: 0;
    padding: 0;
    border: 0;
    background: none;
    color: inherit;
    font: inherit;
    flex: none;
}
svg {
    display: block;
    flex: none;
}

/* icons */
.icon {
    width: 16px;
    height: 16px;
    fill: none;
    stroke: #000;
    shape-rendering: crispEdges;
}
.smooth,
.icon circle {
    shape-rendering: auto;
}
.icon .fill {
    fill: #000;
    stroke: none;
}
.icon.dim {
    stroke: #a8a6aa;
}
.icon.dim .fill {
    fill: #a8a6aa;
}
.icon.red,
.icon .red {
    stroke: #86000c;
}
.icon .redfill {
    fill: #86000c;
}
.icon .blk {
    stroke: #000;
}
.icon.blue,
.icon .blue {
    stroke: #00008b;
}

/* title bar */
.titlebar {
    flex: none;
    height: 27px;
    display: flex;
    align-items: center;
    gap: 3px;
    padding: 0 2px 0 3px;
    background: linear-gradient(#1c48b0, #2a5cc4 1px, #7ab4ee 3px, #66a8ea 10px, #4084d8 13px, #3a70cc 17px, #2c54b2 24px, #1f429e);
}
.titlebar .logo {
    width: 16px;
    height: 16px;
}
.titlebar h1 {
    flex: 1;
    margin: 0;
    color: #fff;
    font-size: 16px;
    line-height: 24px;
    text-shadow: 1px 1px #1c3c88;
    white-space: pre;
}
.titlebar .latin {
    font-family: "Open Sans", sans-serif;
    font-size: 15px;
}
.winbtn {
    width: 20px;
    height: 20px;
    margin-bottom: 2px;
    border: 1px solid #b8d4f4;
    border-radius: 3px;
    background: linear-gradient(135deg, #7fb0ec, #3a70cc 60%, #2c60c0);
}
.winbtn svg {
    width: 18px;
    height: 18px;
}
.winbtn.close {
    background: linear-gradient(135deg, #f0a088, #d8502c 50%, #c03c18);
}

/* menu */
.menubar {
    flex: none;
    height: 28px;
    display: flex;
    align-items: center;
    gap: 12px;
    padding-left: 3px;
}
.menubar .grip {
    margin-right: -12px;
}
.menubar .doc {
    margin-right: -5px;
}
.mdi {
    margin-left: auto;
    display: flex;
    gap: 2px;
}
.mdi button {
    width: 20px;
    height: 20px;
    padding: 1px;
    border: 1px solid;
    border-color: #fff #77757a #77757a #fff;
    box-shadow: 1px 1px #a8a6aa;
}

/* toolbars */
.toolbar {
    flex: none;
    height: 26px;
    display: flex;
    align-items: center;
    overflow: hidden;
    border-top: 1px solid #a09ea2;
    box-shadow: inset 0 1px #fff;
}
.toolbar > .grip:first-child {
    margin-left: 3px;
}
.toolbar button {
    width: 24px;
    height: 22px;
    display: flex;
    align-items: center;
    justify-content: center;
}
.toolbar .pressed {
    background: #f8f7fa;
    border: 1px solid;
    border-color: #a09ea2 #fff #fff #a09ea2;
}
.grip {
    flex: none;
    width: 6px;
    height: 20px;
    background: linear-gradient(90deg, #fff 1px, transparent 1px, #a8a6aa 1px, #a8a6aa 2px, #ebe9ee 2px, #ebe9ee 3px, #fff 3px, #fff 4px, #a8a6aa 4px, #a8a6aa 5px, transparent 5px);
}
.grip.mid {
    margin-left: 8px;
    box-shadow: -4px 0 #ebe9ee, -5px 0 #a8a6aa;
}
.sep {
    flex: none;
    width: 8px;
    height: 20px;
    background: linear-gradient(90deg, transparent 5px, #a8a6aa 5px, #a8a6aa 6px, #fff 6px, #fff 7px, transparent 7px);
}
.end {
    width: 4px;
    height: 24px;
    border-right: 1px solid #a8a6aa;
}
.group {
    flex: none;
    height: 24px;
    display: flex;
    align-items: center;
    border-right: 1px solid #a8a6aa;
}
.group.first {
    width: 81px;
    padding-left: 5px;
}
.group.blank {
    width: 321px;
}
.group.blank + .grip {
    margin: 0 1px 0 2px;
}
.combo {
    position: relative;
    flex: none;
    height: 20px;
}
.combo select {
    appearance: none;
    width: 100%;
    height: 20px;
    padding: 0 1px;
    border: 2px solid;
    border-color: #88868a #c8c6ca #c8c6ca #88868a;
    border-radius: 0;
    background: #fff;
    color: #000;
    font: 11px/14px "Noto Sans", sans-serif;
}
.combo select:disabled {
    background: #ebe9ee;
    opacity: 1;
}
.combo .arrow {
    position: absolute;
    top: 2px;
    right: 2px;
    width: 16px;
    height: 16px;
    border: 1px solid;
    border-color: #fff #88868a #88868a #fff;
    background: #ebe9ee;
    pointer-events: none;
}
.combo select:disabled + .arrow {
    fill: #a8a6aa;
}
.combo.zoom {
    width: 52px;
    margin: 0 3px 0 4px;
}
.combo.font {
    width: 153px;
    margin: 0 3px 0 4px;
}
.combo.size {
    width: 68px;
    margin: 0 3px 0 4px;
}
.toolbar .letter {
    color: #a8a6aa;
    font: bold 15px/20px "Liberation Serif", serif;
    text-shadow: 1px 1px #fff;
}
.toolbar.bottom {
    padding-left: 25px;
}

/* workspace */
.workspace {
    flex: 1;
    min-height: 0;
    display: flex;
    border-top: 1px solid #88868a;
}
.sidebar {
    flex: none;
    width: 28px;
    display: flex;
    flex-direction: column;
    padding: 4px 2px 0 0;
    border-right: 2px solid #a09ea2;
}
.sidebar button {
    width: 24px;
    height: 22px;
    display: flex;
    align-items: center;
    justify-content: center;
}
.hgrip {
    height: 6px;
    margin: 0 0 2px 2px;
    border: solid #a8a6aa;
    border-width: 1px 0;
    background: linear-gradient(#fff 1px, #ebe9ee 1px, #ebe9ee 2px, #a8a6aa 2px, #a8a6aa 3px, #fff 3px);
}
.hsep {
    height: 8px;
    background: linear-gradient(transparent 3px, #a8a6aa 3px, #a8a6aa 4px, #fff 4px, #fff 5px, transparent 5px);
}
.hsep.wide {
    height: 6px;
    margin-right: -2px;
    background: linear-gradient(transparent 1px, #a8a6aa 1px, #a8a6aa 2px, #fff 2px, #fff 3px, transparent 3px);
}
.center {
    flex: 1;
    min-width: 0;
    display: flex;
    flex-direction: column;
}
.view {
    flex: 1;
    min-height: 0;
    display: flex;
}
.vscroll {
    flex: none;
    width: 17px;
    display: flex;
    flex-direction: column;
    gap: 4px;
    background: #e8effa;
}
.vscroll button {
    height: 17px;
    border: 1px solid #8ca8d0;
    border-radius: 3px;
    background: linear-gradient(135deg, #e4eefc, #b4c8ea);
}
.vscroll svg {
    width: 15px;
    height: 15px;
    fill: none;
    stroke: #3c5478;
    stroke-width: 2;
}
.thumb {
    flex: 1;
    display: flex;
    align-items: center;
    justify-content: center;
    border: 1px solid #7c9cc8;
    border-radius: 2px;
    background: linear-gradient(90deg, #fff 1px, #d0e2fb 2px, #dcebfe 8px, #b4ccee 13px, #a4bce0);
}
.thumb i {
    width: 7px;
    height: 8px;
    background: repeating-linear-gradient(#7c98c0 0 1px, #eef5ff 1px 2px);
}
.canvas {
    flex: 1;
    overflow: hidden;
    padding: 15px 0 0 116px;
    background: #c8c8c8;
}

/* drawing sheet */
.sheet {
    width: 763px;
    height: 539px;
    background: #fff;
    box-shadow: 4px 4px #666;
    shape-rendering: crispEdges;
}
.sheet .line {
    fill: none;
    stroke: #000;
}
.sheet .solid path {
    stroke: #000;
    stroke-width: 3;
}
.sheet .solid path:not([fill]) {
    fill: none;
}
.sheet .solid .shine {
    stroke: #ff9a30;
}
.zone text {
    fill: #999;
    font: 4px "Liberation Sans", sans-serif;
    text-anchor: middle;
}
.zone.start text {
    text-anchor: start;
}
.field text {
    fill: #555;
    font: 5px "Liberation Sans", sans-serif;
    text-anchor: middle;
}
.field .big {
    font-size: 7px;
}

/* sheet tabs */
.sheettabs {
    flex: none;
    height: 16px;
    display: flex;
    padding-left: 1px;
    border-bottom: 1px solid #fff;
}
.sheettabs .nav {
    width: 15px;
    height: 15px;
    border: 1px solid;
    border-color: #fff #77757a #77757a #fff;
}
.sheettabs .nav .icon {
    width: 13px;
    height: 13px;
}
.tab {
    display: flex;
    height: 15px;
    font: bold 13px/14px "DejaVu Serif", serif;
}
.tab svg {
    width: 8px;
    height: 15px;
    fill: none;
    stroke: #000;
}
.tab .paper {
    fill: #fff;
    stroke: none;
}
.tab span {
    height: 15px;
    background: #fff;
}
.rest {
    flex: 1;
    border-top: 1px solid #000;
}

/* catalog on the right */
.catalog {
    flex: none;
    width: 30px;
    display: flex;
    flex-direction: column;
    padding: 2px 2px 1px 2px;
    border-left: 1px solid #fff;
}
.strip {
    flex: 1;
    margin-left: 2px;
    border-left: 1px solid #000;
}
.strip .nav {
    display: block;
    width: 16px;
    height: 15px;
    margin-left: 2px;
    border: 1px solid;
    border-color: #fff #55535a #55535a #fff;
}
.strip .nav svg {
    width: 14px;
    height: 13px;
}
.tabs {
    display: flex;
    flex-direction: column;
    align-items: flex-start;
    gap: 2px;
    padding-top: 3px;
}
.tabs button {
    width: 20px;
    padding: 4px 0;
    border: 1px solid #a8a6aa;
    border-width: 0 1px 1px 0;
    border-radius: 0 4px 4px 0;
    font: 15px/18px "Noto Sans CJK SC", sans-serif;
    writing-mode: vertical-rl;
    text-orientation: sideways;
}
.tabs .on {
    padding: 6px 0 8px;
    border-color: #000;
    font-weight: bold;
}
.well {
    flex: none;
    height: 50px;
    margin-left: 2px;
    background: #fff;
    border-right: 1px solid #c8c6ca;
}

/* status bar */
.status {
    flex: none;
    height: 20px;
    display: flex;
    align-items: center;
    gap: 2px;
    border-top: 1px solid #a09ea2;
}
.status p {
    flex: 1;
    margin: 0;
    padding-left: 2px;
}
.pane {
    height: 16px;
    border: 1px solid;
    border-color: #a09ea2 #fff #fff #a09ea2;
    line-height: 15px;
    white-space: nowrap;
}
.pane.wide {
    width: 117px;
}
.pane.units {
    width: 69px;
    display: flex;
    justify-content: space-between;
    font-size: 11px;
}
.pane.time {
    width: 54px;
    font-size: 11px;
}

/* taskbar */
.taskbar {
    flex: none;
    height: 30px;
    display: flex;
    align-items: center;
    color: #fff;
    background: linear-gradient(#2450a8 1px, #86bcf2 2px, #62a4ea 8px, #4684da 14px, #3364c6 22px, #2a50b0);
}
.start {
    align-self: stretch;
    width: 100px;
    display: flex;
    align-items: center;
    gap: 6px;
    padding-left: 10px;
    border-radius: 0 9px 9px 0;
    background: linear-gradient(#1f7c24, #6cc46c 3px, #3c9c3c 9px, #34942f 20px, #1c6c1c);
    box-shadow: inset -2px 0 2px #176017;
    font-size: 19px;
    line-height: 26px;
    font-style: italic;
    text-shadow: 1px 1px 1px #0c4a0c;
}
.start svg {
    width: 20px;
    height: 20px;
}
.quick {
    flex: none;
    width: 104px;
    display: flex;
    align-items: center;
    gap: 7px;
    padding-left: 11px;
}
.quick svg,
.task svg,
.tray svg {
    width: 16px;
    height: 16px;
}
.more {
    font-size: 14px;
    font-weight: bold;
    line-height: 16px;
    padding-bottom: 8px;
}
.task {
    width: 157px;
    height: 25px;
    margin-right: 3px;
    display: flex;
    align-items: center;
    gap: 2px;
    padding-left: 8px;
    border: 1px solid #2a5cb8;
    border-radius: 2px;
    background: linear-gradient(#86bcf4, #5c9ce8 5px, #3f7cd8 12px, #2f62c4);
    white-space: nowrap;
}
.task.active {
    background: linear-gradient(#1c3c80, #224c98 5px, #1c4690);
    border-color: #122c68;
}
.lang {
    width: 16px;
    height: 16px;
    margin-left: auto;
    border: 1px solid #fff;
    outline: 1px solid #e81818;
    background: #e81818;
    font-size: 12px;
    line-height: 14px;
    text-align: center;
}
.tray {
    align-self: stretch;
    width: 111px;
    margin-left: 21px;
    display: flex;
    align-items: center;
    gap: 2px;
    background: linear-gradient(#5c8cd8 1px, #a8cdf6 3px, #dceafc 12px, #e6f0fd 18px, #98bcec);
    color: #000;
}
.fold {
    margin: 0 1px 0 -8px;
}
.tray span {
    margin-left: 4px;
}
```
